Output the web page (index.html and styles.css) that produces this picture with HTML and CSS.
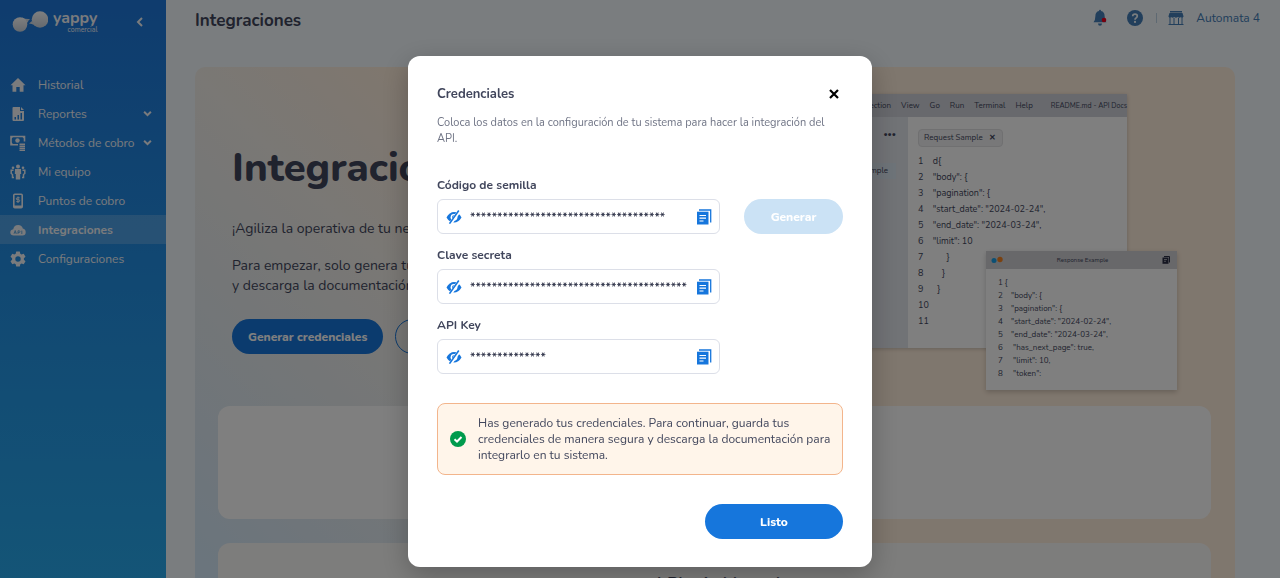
FILE: index.html
```html
<!DOCTYPE html>
<html lang="es">
<head>
  <meta charset="UTF-8" />
  <meta name="viewport" content="width=device-width, initial-scale=1.0"/>
  <title>Yappy Comercial - Integraciones</title>
  <link rel="stylesheet" href="styles.css">
</head>
<body>
  <div class="app">
    <aside class="sidebar">
      <div class="brand">
        <svg class="brand-mark" viewBox="0 0 36 22" width="36" height="22">
          <defs>
            <linearGradient id="ball" x1="0" y1="0" x2="0" y2="1">
              <stop offset="0" stop-color="#ffffff"/>
              <stop offset="1" stop-color="#c9d3de"/>
            </linearGradient>
          </defs>
          <path d="M10 6.500 Q14 8.500 18 8 Q16 9.500 16 11 Q15 11.500 14 13 Z M17 12.500 Q18.500 11 20 10 L22 14 Q20 12.500 17 12.500 Z" fill="#d5dde6"/>
          <circle cx="8" cy="13.500" r="7.300" fill="url(#ball)"/>
          <circle cx="28" cy="8.500" r="8.300" fill="url(#ball)"/>
        </svg>
        <div class="brand-name">
          <span class="brand-yappy">yappy</span>
          <span class="brand-sub">comercial</span>
        </div>
        <button class="collapse" aria-label="Contraer menú">
          <svg viewBox="0 0 8 10" width="8" height="10"><path d="M6 1 L2 5 L6 9" fill="none" stroke="currentColor" stroke-width="2"/></svg>
        </button>
      </div>

      <nav class="menu">
        <a href="#">
          <svg viewBox="0 0 16 16"><path d="M8 1 L15.500 8.200 H13.500 V14.800 H9.700 V10 H6.300 V14.800 H2.500 V8.200 H.5 Z" fill="currentColor"/></svg>
          <span>Historial</span>
        </a>
        <a href="#">
          <svg viewBox="0 0 16 16"><path fill="currentColor" fill-rule="evenodd" d="M3.500 1 H10 V5 H14 V14 Q14 15 13 15 H3.500 Q2.500 15 2.500 14 V2 Q2.500 1 3.500 1 Z M4.500 11 V13.500 H6 V11 Z M7.500 9 V13.500 H9 V9 Z M10.500 7 V13.500 H12 V7 Z M11 1 L14 4 H11 Z"/></svg>
          <span>Reportes</span>
          <svg class="caret" viewBox="0 0 8 6"><path d="M1 1.500 L4 4.500 L7 1.500" fill="none" stroke="currentColor" stroke-width="1.800"/></svg>
        </a>
        <a href="#">
          <svg viewBox="0 0 16 16"><g fill="none" stroke="currentColor"><path d="M8 9.800 H1 V1.500 H14.500 V6.500" stroke-width="1.600"/><path d="M9.500 9.200 H15 M9.500 11.200 H15 M9.500 13.200 H15 M9.500 15.200 H15" stroke-width="1.500"/></g><circle cx="7.500" cy="5.500" r="2.200" fill="currentColor"/><path d="M1 1 H4 L1 4 Z M14.500 1 V4 L11.500 1 Z M1 10 V7 L4 10 Z" fill="currentColor"/></svg>
          <span>Métodos de cobro</span>
          <svg class="caret" viewBox="0 0 8 6"><path d="M1 1.500 L4 4.500 L7 1.500" fill="none" stroke="currentColor" stroke-width="1.800"/></svg>
        </a>
        <a href="#">
          <svg viewBox="0 0 16 16"><g fill="currentColor"><circle cx="8" cy="2.500" r="2"/><path d="M5 5 H11 L11.200 10 H10.200 V15.500 H5.800 V10 H4.800 Z"/><circle cx="3" cy="3.800" r="1.300"/><circle cx="13" cy="3.800" r="1.300"/></g><path d="M3.500 6.200 H1.200 V9.500 L2.500 10.500 V13.500 H4 M12.500 6.200 H14.800 V9.500 L13.500 10.500 V13.500 H12" fill="none" stroke="currentColor" stroke-width="1.500"/></svg>
          <span>Mi equipo</span>
        </a>
        <a href="#">
          <svg viewBox="0 0 16 16"><rect x="3.800" y="1.300" width="8.400" height="13.400" rx="1" fill="none" stroke="currentColor" stroke-width="1.600"/><path d="M4 12.500 H12 V14.500 H4 Z" fill="currentColor"/><path d="M9.700 4.800 H7.200 Q6.300 4.800 6.300 5.800 Q6.300 6.700 7.200 6.700 H8.800 Q9.700 6.700 9.700 7.700 Q9.700 8.600 8.800 8.600 H6.300 M8 3.500 V10" fill="none" stroke="currentColor" stroke-width="1"/></svg>
          <span>Puntos de cobro</span>
        </a>
        <a href="#" class="active">
          <svg viewBox="0 0 16 16"><path d="M4 13.500 Q.3 13.500 .3 10.500 Q.3 7.800 3.200 7.300 Q4 3 8.200 3 Q12 3 12.800 6.500 Q15.700 7.200 15.700 10.200 Q15.700 13.500 12.500 13.500 Z" fill="currentColor"/><path d="M4 11.800 L5.200 8.500 L6.400 11.800 M4.500 10.800 H6 M8 12 V8.800 H9.200 Q10 8.800 10 9.700 Q10 10.500 9.200 10.500 H8 M11.800 8.600 V12" fill="none" stroke="#4b9fdd" stroke-width=".8"/></svg>
          <span>Integraciones</span>
        </a>
        <a href="#">
          <svg viewBox="0 0 16 16"><path fill="currentColor" fill-rule="evenodd" d="M6.200 .5 H9.800 L10.300 2.700 L11.600 3.400 L13.700 2.700 L15.500 5.800 L13.900 7.300 V8.700 L15.500 10.200 L13.700 13.300 L11.600 12.600 L10.300 13.300 L9.800 15.500 H6.200 L5.700 13.300 L4.400 12.600 L2.300 13.300 L.5 10.200 L2.100 8.700 V7.300 L.5 5.800 L2.300 2.700 L4.400 3.400 L5.700 2.700 Z M8 5.300 A2.700 2.700 0 1 0 8 10.700 A2.700 2.700 0 1 0 8 5.300 Z"/></svg>
          <span>Configuraciones</span>
        </a>
      </nav>
    </aside>

    <main class="main">
      <header class="topbar">
        <h1>Integraciones</h1>
        <div class="topbar-right">
          <button class="icon-button" aria-label="Notificaciones">
            <svg viewBox="0 0 16 18" width="16" height="18"><path d="M8 .8 Q9 .8 9 2 Q12.600 2.800 12.600 7 Q12.600 11 14.500 13.200 H1.500 Q3.400 11 3.400 7 Q3.400 2.800 7 2 Q7 .8 8 .8 Z M6 14.500 H10 Q10 16.800 8 16.800 Q6 16.800 6 14.500 Z" fill="currentColor"/><circle cx="12" cy="11" r="2.300" fill="#f0001c"/></svg>
          </button>
          <button class="icon-button" aria-label="Ayuda">
            <svg viewBox="0 0 16 16" width="16" height="16"><circle cx="8" cy="8" r="8" fill="currentColor"/><path d="M5.700 6.200 Q5.800 4.200 8 4.200 Q10.300 4.200 10.300 6.100 Q10.300 7.300 9.100 7.900 Q8 8.500 8 9.700" fill="none" stroke="#f4fbff" stroke-width="1.700"/><circle cx="8" cy="11.900" r="1.100" fill="#f4fbff"/></svg>
          </button>
          <span class="divider"></span>
          <a href="#" class="store">
            <svg viewBox="0 0 16 16" width="16" height="16"><path d="M2 1 H14 V2.500 H2 Z M1.500 3 H14.500 L15.600 6.500 Q14.500 8.500 13 7 Q11.500 8.500 9.700 7 Q8 8.500 6.300 7 Q4.500 8.500 3 7 Q1.500 8.500 .4 6.500 Z" fill="currentColor"/><path d="M2 7 V14.500 M14 7 V14.500 M6 8 V14.500 M10.500 8 V14.500 M.5 14.500 H15.500" fill="none" stroke="currentColor" stroke-width="1"/></svg>
            <span>Automata 4</span>
          </a>
        </div>
      </header>

      <section class="hero">
        <div class="intro">
          <div class="intro-text">
            <h2>Integraciones</h2>
            <p>¡Agiliza la operativa de tu negocio!</p>
            <p>Para empezar, solo genera tus credenciales<br>y descarga la documentación.</p>
            <div class="intro-actions">
              <button class="btn btn-primary">Generar credenciales</button>
              <button class="btn btn-outline">Documentación</button>
            </div>
          </div>

          <div class="illustration">
            <div class="editor">
              <div class="editor-bar">
                <span>File</span><span>Edit</span><span>Selection</span><span>View</span><span>Go</span><span>Run</span><span>Terminal</span><span>Help</span>
                <span class="editor-title">README.md - API Docs</span>
              </div>
              <div class="editor-body">
                <div class="explorer">
                  <span class="dots">•••</span>
                  <span class="explorer-file">Request Sample</span>
                </div>
                <div class="code">
                  <span class="tab">Request Sample <b>✕</b></span>
<pre>1    d{
2    "body": {
3    "pagination": {
4    "start_date": "2024-02-24",
5    "end_date": "2024-03-24",
6    "limit": 10
7          }
8        }
9      }
10
11</pre>
                </div>
              </div>
            </div>

            <div class="response">
              <div class="response-bar">
                <svg viewBox="0 0 12 8" width="12" height="8"><circle cx="3" cy="4.500" r="2.500" fill="#18a0e8"/><circle cx="9" cy="3.500" r="2.700" fill="#f58220"/></svg>
                <span>Response Example</span>
                <svg viewBox="0 0 8 8" width="8" height="8"><path d="M2 .5 H7.500 V6.500" fill="none" stroke="#2b2f45"/><path d="M.5 1.500 H6.500 V7.800 H.5 Z" fill="#2b2f45"/><path d="M2 3.500 H5 M2 5.300 H4" stroke="#cfcfd4" stroke-width=".7"/></svg>
              </div>
<pre>1 {
2    "body": {
3    "pagination": {
4    "start_date": "2024-02-24",
5    "end_date": "2024-03-24",
6     "has_next_page": true,
7     "limit": 10,
8     "token":</pre>
            </div>
          </div>
        </div>

        <div class="card"></div>
        <div class="card card-soft">
          <h3>el Plugin Manual</h3>
        </div>
      </section>
    </main>
  </div>

  <div class="overlay">
    <div class="modal" role="dialog" aria-labelledby="modal-title">
      <div class="modal-head">
        <h2 id="modal-title">Credenciales</h2>
        <button class="close" aria-label="Cerrar">
          <svg viewBox="0 0 10 10" width="10" height="10"><path d="M1 1 L9 9 M9 1 L1 9" stroke="#000" stroke-width="2.200"/></svg>
        </button>
      </div>
      <p class="modal-text">Coloca los datos en la configuración de tu sistema para hacer la integración del API.</p>

      <svg class="defs" width="0" height="0">
        <symbol id="eye-off" viewBox="0 0 16 14">
          <path d="M.5 7.500 Q3.500 2 8 2 Q12.500 2 15.500 7.500 Q12.500 12.500 8 12.500 Q3.500 12.500 .5 7.500 Z" fill="#1676dc"/>
          <circle cx="8" cy="7.300" r="3.400" fill="#fff"/>
          <circle cx="8" cy="7.300" r="2" fill="#1676dc"/>
          <path d="M13.800 .3 L4.300 14" stroke="#fff" stroke-width="3.400"/>
          <path d="M12.800 .5 L3.500 13.600" stroke="#1676dc" stroke-width="1.600"/>
        </symbol>
        <symbol id="copy" viewBox="0 0 16 16">
          <path d="M3 1 H14.700 V13.500" fill="none" stroke="#1676dc" stroke-width="1.300"/>
          <path d="M1 2.700 H12.500 V15.500 H1 Z" fill="#1676dc"/>
          <path d="M3.500 6.500 H10 M3.500 9.200 H10 M3.500 12 H7.500" stroke="#fff" stroke-width="1.200"/>
        </symbol>
      </svg>

      <div class="field">
        <label for="seed">Código de semilla</label>
        <div class="field-row">
          <div class="input-box">
            <button aria-label="Mostrar código"><svg width="16" height="14"><use href="#eye-off"/></svg></button>
            <input type="text" id="seed" value="************************************" readonly />
            <button aria-label="Copiar código"><svg width="16" height="16"><use href="#copy"/></svg></button>
          </div>
          <button class="btn btn-disabled" disabled>Generar</button>
        </div>
      </div>

      <div class="field">
        <label for="secret">Clave secreta</label>
        <div class="field-row">
          <div class="input-box">
            <button aria-label="Mostrar clave"><svg width="16" height="14"><use href="#eye-off"/></svg></button>
            <input type="text" id="secret" value="****************************************" readonly />
            <button aria-label="Copiar clave"><svg width="16" height="16"><use href="#copy"/></svg></button>
          </div>
        </div>
      </div>

      <div class="field">
        <label for="apikey">API Key</label>
        <div class="field-row">
          <div class="input-box">
            <button aria-label="Mostrar API Key"><svg width="16" height="14"><use href="#eye-off"/></svg></button>
            <input type="text" id="apikey" value="**************" readonly />
            <button aria-label="Copiar API Key"><svg width="16" height="16"><use href="#copy"/></svg></button>
          </div>
        </div>
      </div>

      <div class="alert">
        <svg viewBox="0 0 16 16" width="16" height="16"><circle cx="8" cy="8" r="8" fill="#009b4d"/><path d="M4.500 8.200 L7 10.500 L11.500 6" fill="none" stroke="#fff" stroke-width="2"/></svg>
        <p>Has generado tus credenciales. Para continuar, guarda tus credenciales de manera segura y descarga la documentación para integrarlo en tu sistema.</p>
      </div>

      <div class="modal-foot">
        <button class="btn btn-primary btn-done">Listo</button>
      </div>
    </div>
  </div>
</body>
</html>
```

FILE: styles.css
```css
* {
  box-sizing: border-box;
}

body {
  margin: 0;
  font-family: Nunito, Lato, 'Open Sans', sans-serif;
  font-size: 12px;
  line-height: 16px;
  color: #41465c;
  background-color: #f4fbff;
}

h1, h2, h3, p, pre {
  margin: 0;
}

button,
input {
  font-family: inherit;
}

a {
  color: inherit;
  text-decoration: none;
}

.app {
  display: grid;
  grid-template-columns: 166px 1fr;
  height: 100vh;
  overflow: hidden;
}

/* sidebar */
.sidebar {
  background: linear-gradient(#1e78dc, #28aaee);
  color: #f4f6fa;
}

.brand {
  display: flex;
  align-items: center;
  height: 70px;
  padding: 0 22px 26px 12px;
}

.brand-name {
  display: flex;
  flex-direction: column;
  align-items: flex-end;
  margin: 0 auto 0 5px;
}

.brand-yappy {
  font-size: 16px;
  font-weight: 700;
  line-height: 16px;
}

.brand-sub {
  font-size: 7px;
  line-height: 8px;
}

.collapse,
.icon-button,
.close,
.input-box button {
  display: flex;
  padding: 0;
  border: none;
  background: none;
  color: inherit;
  cursor: pointer;
}

.menu a {
  display: flex;
  align-items: center;
  height: 29px;
  padding: 0 14px 0 10px;
}

.menu a svg {
  width: 16px;
  height: 16px;
  margin-right: 12px;
}

.menu a .caret {
  width: 9px;
  height: 7px;
  margin: 0 0 0 auto;
}

.menu .active {
  background-color: rgba(255, 255, 255, 0.2);
  font-weight: 700;
}

/* top bar */
.main {
  padding: 0 45px 0 29px;
  overflow: hidden;
}

.topbar {
  display: flex;
  justify-content: space-between;
  height: 67px;
  margin-right: -25px;
  padding-top: 8px;
}

.topbar h1 {
  font-size: 17px;
  line-height: 26px;
}

.topbar-right {
  display: flex;
  align-items: center;
  gap: 19px;
  height: 20px;
  color: #447eb8;
}

.divider {
  width: 1px;
  height: 10px;
  margin-left: -6px;
  background-color: #bcd3e4;
}

.store {
  display: flex;
  align-items: center;
  gap: 12px;
  margin-left: -8px;
}

/* hero */
.hero {
  padding: 0 24px 0 23px;
  border-radius: 10px;
  background: linear-gradient(45deg, #d6eafa 11%, #e6ecf0 26%, #f4f0ea 39%, #ffeedc 51%);
}

.intro {
  display: flex;
  justify-content: space-between;
  height: 339px;
  padding: 27px 84px 0 14px;
}

.intro-text {
  padding-top: 50px;
  font-size: 14px;
  line-height: 20px;
  white-space: nowrap;
}

.intro-text h2 {
  margin-bottom: 27px;
  font-size: 40px;
  font-weight: 800;
  line-height: 48px;
}

.intro-text p {
  margin-bottom: 17px;
}

.intro-actions {
  display: flex;
  gap: 12px;
  margin-top: 23px;
}

.btn {
  height: 35px;
  padding: 0 16px;
  border: none;
  border-radius: 18px;
  font-size: 12px;
  font-weight: 800;
  cursor: pointer;
}

.btn-primary {
  background-color: #1676dc;
  color: #fff;
}

.btn-outline {
  border: 1px solid #1676dc;
  background: none;
  color: #1676dc;
}

.btn-disabled {
  width: 99px;
  background-color: #cbe2f5;
  color: #fff;
}

/* code illustration */
.illustration {
  position: relative;
  width: 420px;
}

.editor {
  height: 254px;
  background-color: #fff;
  box-shadow: 0 1px 4px rgba(0, 0, 0, 0.2);
  font-size: 8px;
}

.editor-bar {
  display: flex;
  align-items: center;
  justify-content: flex-end;
  gap: 10px;
  height: 23px;
  background-color: #d0d2da;
}

.editor-title {
  margin-left: 8px;
  font-size: 7px;
}

.editor-body {
  display: flex;
  height: 231px;
}

.explorer {
  display: flex;
  flex-direction: column;
  align-items: flex-end;
  gap: 20px;
  width: 201px;
  padding: 10px 12px;
  background-color: #e3e6ed;
}

.explorer-file {
  padding: 0 8px;
  background-color: #dde8f2;
}

.code {
  padding: 12px 10px;
}

.tab {
  display: inline-block;
  padding: 0 6px 0 5px;
  border: 1px solid #e0e0e2;
  border-radius: 4px;
  background-color: #f0f0f2;
}

.tab b {
  margin-left: 4px;
}

pre {
  font-family: inherit;
}

.code pre {
  margin-top: 6px;
  font-size: 9px;
}

.response {
  position: absolute;
  right: -50px;
  top: 157px;
  width: 191px;
  height: 139px;
  background-color: #fff;
  box-shadow: 0 2px 5px rgba(0, 0, 0, 0.2);
  font-size: 8px;
  line-height: 13px;
}

.response-bar {
  display: flex;
  align-items: center;
  justify-content: space-between;
  height: 18px;
  padding: 0 7px 0 5px;
  background-color: #d0d0d4;
  font-size: 6px;
}

.response pre {
  padding: 7px 12px;
}

/* cards */
.card {
  height: 113px;
  margin-bottom: 24px;
  border-radius: 12px;
  background-color: #fff;
}

.card-soft {
  height: 200px;
  margin-bottom: 0;
  padding-top: 30px;
  background-color: #fbfaf9;
  text-align: center;
}

.card h3 {
  font-size: 17px;
  line-height: 24px;
}

/* modal */
.overlay {
  position: fixed;
  inset: 0;
  display: flex;
  justify-content: center;
  align-items: flex-start;
  padding-top: 56px;
  background-color: rgba(0, 0, 0, 0.5);
}

.modal {
  width: 100%;
  max-width: 464px;
  padding: 28px 29px;
  border-radius: 12px;
  background-color: #fff;
  box-shadow: 0 8px 28px rgba(0, 0, 0, 0.25);
}

.modal-head {
  display: flex;
  justify-content: space-between;
  align-items: center;
  padding-right: 4px;
}

.modal-head h2 {
  font-size: 13px;
  line-height: 20px;
}

.modal-text {
  margin: 11px 0 30px;
  color: #6f7485;
  font-size: 11px;
}

.defs {
  position: absolute;
}

.field {
  margin-bottom: 13px;
}

.field label {
  display: block;
  margin-bottom: 6px;
  font-weight: 700;
}

.field-row {
  display: flex;
  justify-content: space-between;
}

.input-box {
  display: flex;
  align-items: center;
  gap: 8px;
  width: 283px;
  height: 35px;
  padding: 0 7px 0 8px;
  border: 1px solid #dcdfe8;
  border-radius: 6px;
}

.input-box input {
  flex: 1;
  min-width: 0;
  padding: 0;
  border: none;
  outline: none;
  background: none;
  color: #2b2f45;
  font-size: 12px;
  font-weight: 600;
}

.alert {
  display: flex;
  align-items: center;
  gap: 12px;
  margin: 29px 0;
  padding: 11px 8px 11px 12px;
  border: 1px solid #f3b58c;
  border-radius: 8px;
  background-color: #fff5ea;
}

.alert svg {
  flex: none;
}

.modal-foot {
  display: flex;
  justify-content: flex-end;
}

.btn-done {
  width: 138px;
}
```
